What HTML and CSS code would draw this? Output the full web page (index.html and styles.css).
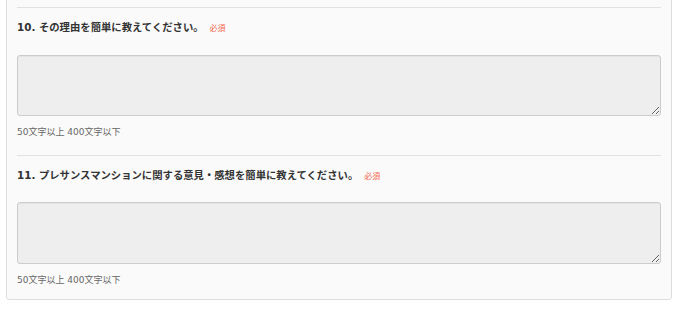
FILE: index.html
```html
<!DOCTYPE html>
<html lang="ja">
<head>
<meta charset="utf-8">
<title>アンケート</title>
<link rel="stylesheet" href="styles.css">
</head>
<body>
<div class="card">
  <div class="question">
    <div class="q-title">10. その理由を簡単に教えてください。<span class="req">必須</span></div>
    <textarea class="answer"></textarea>
    <div class="hint">50文字以上 400文字以下</div>
  </div>
  <div class="question">
    <div class="q-title">11. プレサンスマンションに関する意見・感想を簡単に教えてください。<span class="req">必須</span></div>
    <textarea class="answer answer-2"></textarea>
    <div class="hint">50文字以上 400文字以下</div>
  </div>
</div>
</body>
</html>
```
FILE: styles.css
```css
html, body {
  margin: 0;
  padding: 0;
  background: #ffffff;
}
body {
  font-family: "DejaVu Sans", "Noto Sans CJK JP", sans-serif;
  color: #333;
}
.card {
  box-sizing: border-box;
  width: 666px;
  margin: -4px 0 0 6px;
  padding: 10px 10px 12px 10px;
  background: #fafafa;
  border: 1px solid #dddddd;
  border-radius: 3px;
}
.question {
  border-top: 1px solid #e2e2e2;
  display: flex;
  flex-direction: column;
}
.question + .question {
  margin-top: 16px;
}
.q-title {
  margin-top: 12px;
  height: 14px;
  font-size: 10.35px;
  line-height: 14px;
  font-weight: bold;
  color: #333;
  white-space: nowrap;
}
.req {
  margin-left: 6px;
  font-size: 8px;
  line-height: 8px;
  font-weight: normal;
  color: #f2654a;
}
.answer {
  display: block;
  box-sizing: border-box;
  width: 644px;
  height: 61px;
  margin: 21px 0 0 0;
  padding: 4px;
  background: #eeeeee;
  border: 1px solid #cccccc;
  border-radius: 3px;
  box-shadow: inset 0 1px 1px rgba(0,0,0,0.04);
  font-family: inherit;
  resize: vertical;
}
.answer-2 {
  height: 62px;
  margin-top: 20px;
}
.hint {
  margin-top: 9px;
  height: 14px;
  font-size: 9px;
  line-height: 14px;
  color: #666;
}
```
